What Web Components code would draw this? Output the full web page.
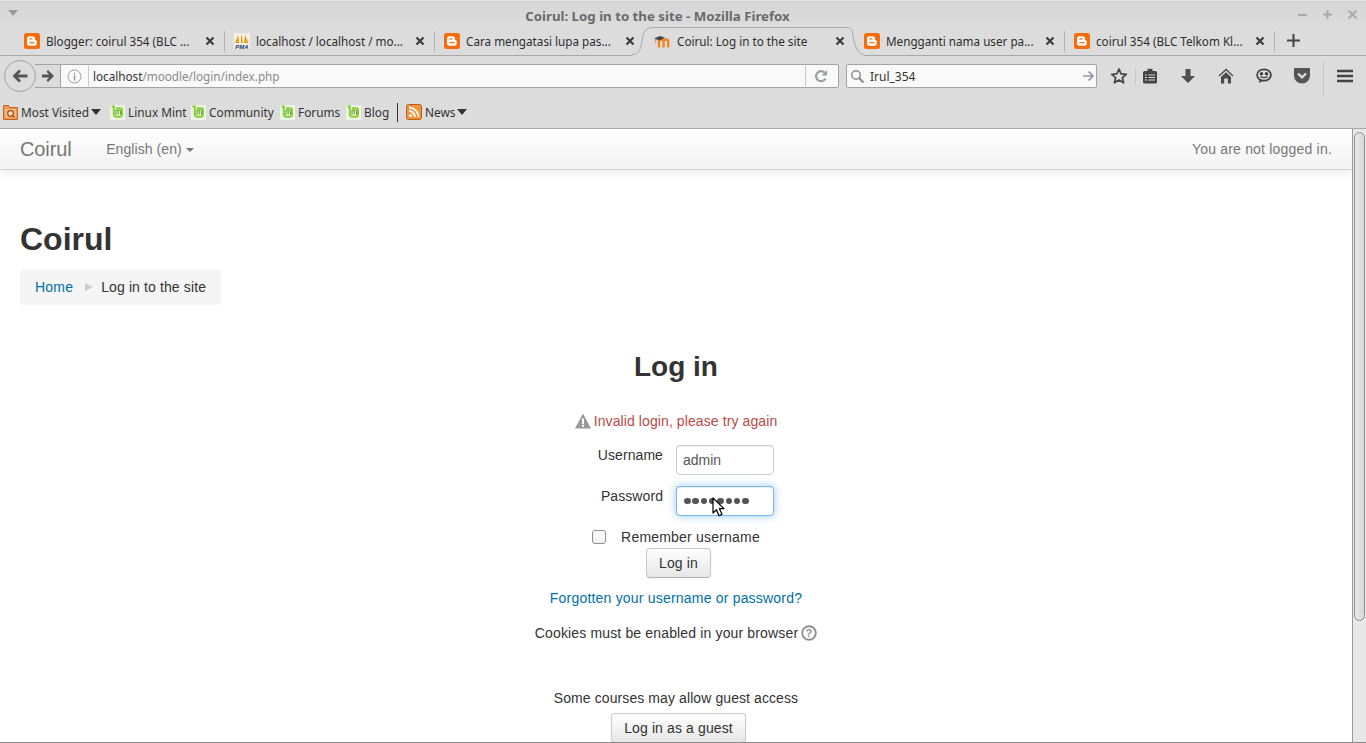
<!DOCTYPE html>
<html><head><meta charset="utf-8"><title>Coirul: Log in to the site</title>
<style>
html,body{margin:0;padding:0;height:743px;overflow:hidden;background:#fff}
body{display:flex;flex-direction:column;font-family:"Noto Sans",sans-serif}
</style></head><body>
<x-titlebar>Coirul: Log in to the site - Mozilla Firefox</x-titlebar>
<x-tabstrip>
<x-tab icon="blogger" sep>Blogger: coirul 354 (BLC ...</x-tab>
<x-tab icon="pma" sep>localhost / localhost / mo...</x-tab>
<x-tab icon="blogger">Cara mengatasi lupa pas...</x-tab>
<x-tab icon="moodle" active>Coirul: Log in to the site</x-tab>
<x-tab icon="blogger" sep>Mengganti nama user pa...</x-tab>
<x-tab icon="blogger" sep>coirul 354 (BLC Telkom Kl...</x-tab>
</x-tabstrip>
<x-toolbar></x-toolbar>
<x-bookmarks>
<x-bm icon="folder" menu style="width:107px">Most Visited</x-bm>
<x-bm icon="mint" style="width:81px">Linux Mint</x-bm>
<x-bm icon="mint" style="width:89px">Community</x-bm>
<x-bm icon="mint" style="width:66px">Forums</x-bm>
<x-bm icon="mint" style="width:60px">Blog</x-bm>
<x-bm icon="rss" menu style="width:70px">News</x-bm>
</x-bookmarks>
<x-viewport>
<x-page-nav></x-page-nav>
<x-page-head></x-page-head>
<x-login></x-login>
</x-viewport>
<script>
const ICONS={
blogger:`<svg width="16" height="16" viewBox="0 0 16 16"><rect width="16" height="16" rx="2.5" fill="#f76d0c"/><path d="M5.6 3.2h3a2.6 2.6 0 0 1 2.5 2.6v.9c0 .4.3.6.7.6.5 0 .9.4.9.9v2a2.7 2.7 0 0 1-2.7 2.6H5.7A2.7 2.7 0 0 1 3 9.800V5.800a2.600 2.600 0 0 1 2.600-2.600z" fill="#fff"/><rect x="5.300" y="5.200" width="3.300" height="1.300" rx=".6" fill="#f76d0c"/><rect x="5.300" y="9" width="5.300" height="1.300" rx=".6" fill="#f76d0c"/></svg>`,
pma:`<svg width="16" height="16" viewBox="0 0 16 16"><rect width="16" height="16" fill="#f2f0ea"/><path d="M1 10 4 2l1.500 8zM6 10l1.500-9 1.500 9zM10 10l1-8 3.500 8z" fill="#f39c12"/><path d="M5 10l1.500-7 .5 7z" fill="#fff"/><text x="8" y="15.500" text-anchor="middle" font-family="Liberation Sans" font-weight="700" font-style="italic" font-size="6" fill="#23346b">PMA</text></svg>`,
moodle:`<svg width="18" height="16" viewBox="0 0 18 16"><path d="M5 14.500V8.800a2.300 2.300 0 0 1 4.600 0v5.700M9.600 8.800a2.300 2.300 0 0 1 4.600 0v5.700" fill="none" stroke="#f58220" stroke-width="2.300"/><path d="M1.700 6.500V10" stroke="#f58220" stroke-width="1"/><path d="M0 5.500 6 3l5 1.800-5.500 2.800z" fill="#444"/></svg>`,
folder:`<svg width="15" height="16" viewBox="0 0 15 16"><path d="M.5 1.500h5l1 2h8v12H.5z" fill="#ef9a55" stroke="#c8641e"/><path d="M2 5h11v9H2z" fill="#f4b67d"/><circle cx="7.500" cy="9.500" r="2.800" fill="#fbe6d0" stroke="#a04f14" stroke-width="1.300"/><path d="M9.500 11.500l2 2" stroke="#a04f14" stroke-width="1.500"/></svg>`,
mint:`<svg width="15" height="15" viewBox="0 0 15 15"><rect width="15" height="15" fill="#eef3e6"/><path d="M1.500 1.500h2.300v8a2.200 2.200 0 0 0 2.200 2.200h3.800a2.200 2.200 0 0 0 2.200-2.200V5.300a2 2 0 0 0-2-2H5.800" fill="none" stroke="#86cf33" stroke-width="2"/><path d="M6 5.200h3.500a1 1 0 0 1 1 1V9.500M6 5.200V10M8.200 6v3.500" stroke="#4f9c16" stroke-width="1" fill="none"/></svg>`,
rss:`<svg width="16" height="16" viewBox="0 0 16 16"><rect x=".5" y=".5" width="15" height="15" rx="2" fill="#f39237" stroke="#b5601e"/><circle cx="4.500" cy="11.500" r="1.600" fill="#fff"/><path d="M3 7a6 6 0 0 1 6 6M3 3.500A9.500 9.500 0 0 1 12.500 13" fill="none" stroke="#fff" stroke-width="1.800"/></svg>`,
close:`<svg width="10" height="10" viewBox="0 0 10 10"><path d="M1.500 1.500l7 7m0-7l-7 7" stroke="#3c3c3c" stroke-width="2.200"/></svg>`,
back:`<svg width="18" height="16" viewBox="0 0 18 16"><path d="M1.500 8 8 1.500 10 3.500 7 6.500h9.500v3H7l3 3-2 2z" fill="#555"/></svg>`,
fwd:`<svg width="14" height="14" viewBox="0 0 14 14"><path d="M13 7 7 1 5.500 2.800 8 5.500H1v3h7l-2.500 2.700L7 13z" fill="#555"/></svg>`,
info:`<svg width="15" height="15" viewBox="0 0 15 15"><circle cx="7.500" cy="7.500" r="6.500" fill="none" stroke="#a0a0a0"/><rect x="6.800" y="6.500" width="1.500" height="5" fill="#999"/><rect x="6.800" y="3.800" width="1.500" height="1.600" fill="#999"/></svg>`,
reload:`<svg width="14" height="14" viewBox="0 0 14 14"><path d="M11.500 9.500A5 5 0 1 1 10.500 3.500" fill="none" stroke="#9a9fa5" stroke-width="2.200"/><path d="M7.500 6.500 13 6.500 13 1z" fill="#9a9fa5"/></svg>`,
search:`<svg width="15" height="15" viewBox="0 0 15 15"><circle cx="6" cy="6" r="4.200" fill="none" stroke="#8a8a8a" stroke-width="1.500"/><path d="M9 9l4.500 4.500" stroke="#8a8a8a" stroke-width="2"/></svg>`,
go:`<svg width="12" height="12" viewBox="0 0 12 12"><path d="M1 6h9M6.500 1.500 11 6l-4.500 4.500" fill="none" stroke="#8d99a8" stroke-width="1.700"/></svg>`,
star:`<svg width="18" height="18" viewBox="0 0 18 18"><path d="M9 2l2.100 4.800 5.200.5-3.900 3.400 1.200 5.100L9 13.100 4.400 15.800l1.200-5.100L1.700 7.300l5.200-.5z" fill="none" stroke="#444" stroke-width="1.700" stroke-linejoin="round"/></svg>`,
list:`<svg width="16" height="16" viewBox="0 0 16 16"><rect x="1" y="3" width="14" height="12.500" rx="1.500" fill="#454545"/><rect x="5.500" y=".8" width="5" height="3" fill="#454545"/><path d="M3 7h2M6.500 7H13M3 9.500h2M6.500 9.500H13M3 12h2M6.500 12H13" stroke="#dcdcdc" stroke-width="1.100"/></svg>`,
down:`<svg width="16" height="16" viewBox="0 0 16 16"><path d="M5.500 1h5v7H15l-7 7-7-7h4.500z" fill="#4f4f4f"/></svg>`,
home:`<svg width="16" height="16" viewBox="0 0 16 16"><path d="M8 .5 0.500 7.500 1.300 8.500 8 2.600 14.700 8.500 15.500 7.500z" fill="#4a4a4a"/><path d="M3 9 8 4.300l5 4.700V15.500H9.800v-5H6.200v5H3z" fill="#4a4a4a"/></svg>`,
smile:`<svg width="16" height="16" viewBox="0 0 16 16"><ellipse cx="8" cy="7" rx="6.900" ry="5.700" fill="#dcdcdc" stroke="#3f3f3f" stroke-width="1.700"/><circle cx="5.500" cy="5.700" r="1.700" fill="#3f3f3f"/><circle cx="10.500" cy="5.700" r="1.700" fill="#3f3f3f"/><path d="M4.300 8.500q3.700 2.300 7.400 0" fill="none" stroke="#3f3f3f" stroke-width="1.300"/><path d="M3.500 11.500l-.5 3.500 4.500-2.500z" fill="#3f3f3f"/></svg>`,
pocket:`<svg width="17" height="17" viewBox="0 0 17 17"><path d="M1.500.5h14a1 1 0 0 1 1 1V8a8 8 0 0 1-16 0V1.500a1 1 0 0 1 1-1z" fill="#555"/><path d="M4.500 6 8.500 9.800 12.500 6" fill="none" stroke="#dcdcdc" stroke-width="2.400"/></svg>`,
burger:`<svg width="16" height="14" viewBox="0 0 16 14"><path d="M0 2h16M0 7h16M0 12h16" stroke="#444" stroke-width="2.500"/></svg>`,
warn:`<svg width="16" height="16" viewBox="0 0 16 16"><path d="M8 .5 16 15.500H0z" fill="#999"/><rect x="7" y="5.500" width="2" height="5.500" fill="#fff"/><rect x="7" y="11.800" width="2" height="2" fill="#fff"/></svg>`,
help:`<svg width="16" height="16" viewBox="0 0 16 16"><circle cx="8" cy="8" r="6.800" fill="#fff" stroke="#909090" stroke-width="1.900"/><text x="8" y="12" text-anchor="middle" font-family="Liberation Sans" font-weight="700" font-size="11" fill="#909090">?</text></svg>`,
cursor:`<svg width="14" height="21" viewBox="0 0 14 21"><path d="M1 1v15l3.500-3.300 2.500 6 3-1.300-2.600-5.800H12z" fill="#fff" stroke="#000" stroke-width="1.200" stroke-linejoin="round"/></svg>`
};
function def(name,css,html,init){
  customElements.define(name,class extends HTMLElement{
    connectedCallback(){
      if(this.shadowRoot)return;
      const r=this.attachShadow({mode:'open'});
      r.innerHTML=`<style>${css}</style>`+(typeof html==='function'?html(this):html);
      if(init)init(this,r);
    }
  });
}
def('x-icon',':host{display:inline-flex;flex:none;align-items:center;justify-content:center}svg{display:block}',h=>ICONS[h.getAttribute('name')]);

def('x-titlebar',`:host{display:flex;align-items:center;justify-content:center;position:relative;height:27px;flex:none;box-sizing:border-box;padding:3px 51px 0 0;
  background:linear-gradient(#cfcfcf,#d6d6d6 6%,#dcdcdc);border-top:1px solid #e6e6e6;font:700 13.25px "Noto Sans",sans-serif;color:#6a6a6a}
  .menu{position:absolute;left:8px;top:9px;width:0;height:0;border:5px solid transparent;border-top:6px solid #999;border-bottom:0}
  .wc{position:absolute;right:9px;top:9px;display:flex;gap:16px}
  svg{display:block}`,
  `<span class="menu"></span><slot></slot><span class="wc">
  <svg width="9" height="9" viewBox="0 0 9 9"><path d="M0 5h9" stroke="#aaa" stroke-width="2"/></svg>
  <svg width="9" height="9" viewBox="0 0 9 9"><path d="M0 4.500h9M4.500 0v9" stroke="#aaa" stroke-width="2"/></svg>
  <svg width="9" height="9" viewBox="0 0 9 9"><path d="M.5.500l8 8m0-8l-8 8" stroke="#aaa" stroke-width="2"/></svg></span>`);

def('x-tabstrip',`:host{display:flex;flex:none;height:29px;box-sizing:border-box;padding-left:15px;border-bottom:1px solid #a8a8a8;background:#dcdcdc;align-items:stretch}
  .plus{display:flex;align-items:center;margin-left:12px;padding-bottom:1px}svg{display:block}`,
  `<slot></slot><span class="plus"><svg width="13" height="13" viewBox="0 0 13 13"><path d="M0 6.500h13M6.500 0v13" stroke="#444" stroke-width="2"/></svg></span>`);

def('x-tab',`:host{display:flex;flex:none;width:210px;box-sizing:border-box;height:29px;padding:0 10px 1px 9px;align-items:center;position:relative;font:11.7px "Noto Sans",sans-serif;color:#2e2e2e;white-space:nowrap}
  :host([sep])::after{content:"";position:absolute;right:0;top:4px;height:21px;width:1px;background:#b4b4b4}
  .t{flex:1;margin-left:6px;overflow:hidden;position:relative;z-index:1}
  x-icon{position:relative;z-index:1}
  :host([active]) .ic{margin:0 -1px 0 0}
  .shape{position:absolute;left:-13px;top:0;z-index:0}`,
  h=>`${h.hasAttribute('active')?`<svg class="shape" width="232" height="29" viewBox="0 0 232 29"><path d="M0 27.500C7 27.500 9 22 10 14 11 6 13 .5 21 .5H214C222 .5 220 6 222 14 224 22 227 27.500 232 27.500V29H0z" fill="#dcdcdc" stroke="none"/><path d="M0 27.500C7 27.500 9 22 10 14 11 6 13 .5 21 .5H214C222 .5 220 6 222 14 224 22 227 27.500 232 27.500" fill="none" stroke="#a8a8a8"/></svg>`:''}
  <x-icon class="ic" name="${h.getAttribute('icon')}"></x-icon><span class="t"><slot></slot></span><x-icon name="close"></x-icon>`);

def('x-toolbar',`:host{display:flex;flex:none;height:44px;box-sizing:border-box;background:#dcdcdc;padding:8px 0 12px 0;align-items:stretch;position:relative;font:11.7px "Noto Sans",sans-serif;color:#333}
  .bar{display:flex;align-items:center;box-sizing:border-box;height:24px;border:1px solid #a4a4a4;border-radius:2px;background:#f9f9f9}
  .urlwrap{display:flex;margin-left:35px;width:804px;}
  .fwd{width:25px;height:24px;flex:none;box-sizing:border-box;border:solid #a4a4a4;border-width:1px 0;background:#dcdcdc;display:flex;align-items:center;justify-content:center}
  .url{flex:1;border-radius:0 2px 2px 0;padding-left:6px}
  .url .path{color:#8a8a8a}
  .vs{width:1px;height:20px;background:#c8c8c8;flex:none}
  .back{position:absolute;left:4px;top:4px;width:32px;height:32px;box-sizing:border-box;border:1px solid #a4a4a4;border-radius:50%;background:#dcdcdc;display:flex;align-items:center;justify-content:center;z-index:1}
  .search{margin-left:7px;width:251px;padding:0 2px 0 3px}
  .btns{display:flex;align-items:center;height:24px;position:relative}
  .btns x-icon{position:absolute;top:50%;transform:translate(-50%,-50%)}
  .vl{position:absolute;width:1px;background:#c6c6c6}`,
  `<span class="back"><x-icon name="back"></x-icon></span>
  <div class="urlwrap"><span class="fwd"><x-icon name="fwd"></x-icon></span>
  <div class="bar url"><x-icon name="info"></x-icon><span class="vs" style="margin:0 4px 0 6px"></span><span style="flex:1">localhost<span class="path">/moodle/login/index.php</span></span><span class="vs"></span><x-icon name="reload" style="width:32px;box-sizing:border-box;padding-right:2px"></x-icon></div></div>
  <div class="bar search"><x-icon name="search"></x-icon><span style="flex:1;margin-left:5px;font-size:12px">Irul_354</span><x-icon name="go"></x-icon></div>
  <div class="btns" style="flex:1">
   <x-icon name="star" style="left:22px"></x-icon><span class="vl" style="left:38px;top:4px;height:17px"></span>
   <x-icon name="list" style="left:53px"></x-icon><x-icon name="down" style="left:91px"></x-icon>
   <x-icon name="home" style="left:129px"></x-icon><x-icon name="smile" style="left:167px"></x-icon>
   <x-icon name="pocket" style="left:205px"></x-icon><span class="vl" style="left:226px;top:-3px;height:36px"></span>
   <x-icon name="burger" style="left:248px"></x-icon>
  </div>`);

def('x-bookmarks',`:host{display:flex;flex:none;height:29px;box-sizing:border-box;background:#dcdcdc;border-bottom:1px solid #a8a8a8;padding:0 0 5px 3px;align-items:center;position:relative}
  .sep{position:absolute;left:397px;top:3px;height:19px;width:1px;background:#333}`,
  `<slot></slot><span class="sep"></span>`);

def('x-bm',`:host{display:flex;flex:none;align-items:center;box-sizing:border-box;font:11.85px "Noto Sans",sans-serif;color:#333;white-space:nowrap}
  .t{margin-left:3px}
  x-icon{margin-top:1px}
  .c{width:0;height:0;border:5px solid transparent;border-top:6px solid #333;border-bottom:0;margin-left:2px;margin-top:0}`,
  h=>`<x-icon name="${h.getAttribute('icon')}"></x-icon><span class="t"><slot></slot></span>${h.hasAttribute('menu')?'<span class="c"></span>':''}`);

def('x-viewport',`:host{display:block;flex:none;height:614px;box-sizing:border-box;position:relative;overflow:hidden;border-bottom:1px solid #8a8a8a;padding-right:14px;background:#fff;font:14px/20px "Liberation Sans",sans-serif;color:#333}
  .track{position:absolute;right:0;top:0;bottom:0;width:14px;box-sizing:border-box;background:#e8e8e8;border-left:1px solid #9a9a9a}
  .thumb{position:absolute;left:1px;right:1px;top:3px;height:489px;border:1px solid #8e8e8e;border-radius:6px;box-sizing:border-box;background:linear-gradient(90deg,#e8e8e8,#d8d8d8)}`,
  `<slot></slot><div class="track"><div class="thumb"></div></div>`);

def('x-page-nav',`:host{display:flex;align-items:center;box-sizing:border-box;height:41px;padding:0 20px;border-bottom:1px solid #d4d4d4;background:linear-gradient(#fff,#f2f2f2);box-shadow:0 1px 10px rgba(0,0,0,.1);color:#777;position:relative}
  .brand{font-size:20px;letter-spacing:-.1px}
  .lang{margin-left:34.5px;letter-spacing:.08px}
  .c{display:inline-block;width:0;height:0;border:4px solid transparent;border-top:4px solid #777;border-bottom:0;margin-left:4px;vertical-align:2px}
  .r{margin-left:auto;letter-spacing:.2px}`,
  `<span class="brand">Coirul</span><span class="lang">English (en)<span class="c"></span></span><span class="r">You are not logged in.</span>`);

def('x-page-head',`:host{display:block;padding:49px 20px 0}
  h1{margin:0 0 10px;font-size:32px;line-height:40px;font-weight:700;color:#333}
  .crumb{display:inline-flex;align-items:center;height:36px;box-sizing:border-box;padding:0 15px;background:#f5f5f5;border-radius:4px}
  a{color:#0070a8;text-decoration:none;letter-spacing:.2px}
  .n{letter-spacing:.12px}
  .s{width:0;height:0;border:4px solid transparent;border-left:8px solid #ccc;border-right:0;margin:0 8px 0 12px}`,
  `<h1>Coirul</h1><div class="crumb"><a href="#">Home</a><span class="s"></span><span class="n">Log in to the site</span></div>`);

def('x-btn',`:host{display:inline-flex;align-items:center;justify-content:center;box-sizing:border-box;height:30px;padding:0 12.5px;border:1px solid #c8c8c8;border-bottom-color:#b3b3b3;border-radius:4px;background:linear-gradient(#fff,#e6e6e6);color:#333;letter-spacing:.12px;box-shadow:inset 0 1px 0 rgba(255,255,255,.2),0 1px 2px rgba(0,0,0,.05)}`,`<slot></slot>`);

def('x-field',`:host{display:flex;align-items:flex-start;gap:13px;margin-bottom:11px}
  .l{width:141px;text-align:right;letter-spacing:.08px}
  .i{width:98px;height:30px;box-sizing:border-box;border:1px solid #ccc;border-radius:4px;background:#fff;color:#555;padding:0 6px;display:flex;align-items:center;box-shadow:inset 0 1px 1px rgba(0,0,0,.075)}
  :host([focus]) .i{border-color:rgba(82,168,236,.8);box-shadow:inset 0 1px 1px rgba(0,0,0,.075),0 0 8px rgba(82,168,236,.6)}
  .d{display:flex;gap:2px;margin-left:1px}.d i{width:6.500px;height:6.500px;border-radius:50%;background:#555;margin-right:-.2px}`,
  h=>`<span class="l">${h.getAttribute('label')}</span><span class="i">${h.hasAttribute('dots')?'<span class="d">'+'<i></i>'.repeat(8)+'</span>':h.getAttribute('value')}</span>`);

def('x-login',`:host{display:block;text-align:center;position:relative}
  h2{margin:0;padding-top:48px;font-size:28px;line-height:28px;font-weight:700;color:#333}
  .err{margin-top:30px;height:20px;color:#b94a48;display:flex;justify-content:center;align-items:center;gap:3px;letter-spacing:.1px}
  .fields{display:flex;flex-direction:column;align-items:flex-start;width:308px;margin:14px auto 0}
  .rem{display:flex;align-items:center;justify-content:center;height:20px;letter-spacing:.2px}
  .cb{width:14px;height:14px;box-sizing:border-box;border:1px solid #8f8f8f;border-radius:3px;background:linear-gradient(#fff,#f0f0f0);margin-right:15px}
  .row{display:flex;justify-content:center;padding-left:5px}
  a{color:#0070a8;text-decoration:none;letter-spacing:.2px}
  .line{height:20px}
  .cur{position:absolute;left:712px;top:192px}`,
  `<h2>Log in</h2>
  <div class="err"><x-icon name="warn"></x-icon><span>Invalid login, please try again</span></div>
  <div class="fields"><x-field label="Username" value="admin"></x-field><x-field label="Password" dots focus></x-field></div>
  <div class="rem"><span class="cb"></span><span>Remember username</span></div>
  <div class="row" style="margin-top:1px"><x-btn>Log in</x-btn></div>
  <div class="line" style="margin-top:10px"><a href="#">Forgotten your username or password?</a></div>
  <div class="line" style="margin-top:15px;display:flex;justify-content:center;align-items:center;gap:3px;letter-spacing:.15px"><span>Cookies must be enabled in your browser</span><x-icon name="help"></x-icon></div>
  <div class="line" style="margin-top:45px;letter-spacing:.09px">Some courses may allow guest access</div>
  <div class="row" style="margin-top:5px"><x-btn>Log in as a guest</x-btn></div>
  <x-icon class="cur" name="cursor"></x-icon>`);
</script>
</body></html>
